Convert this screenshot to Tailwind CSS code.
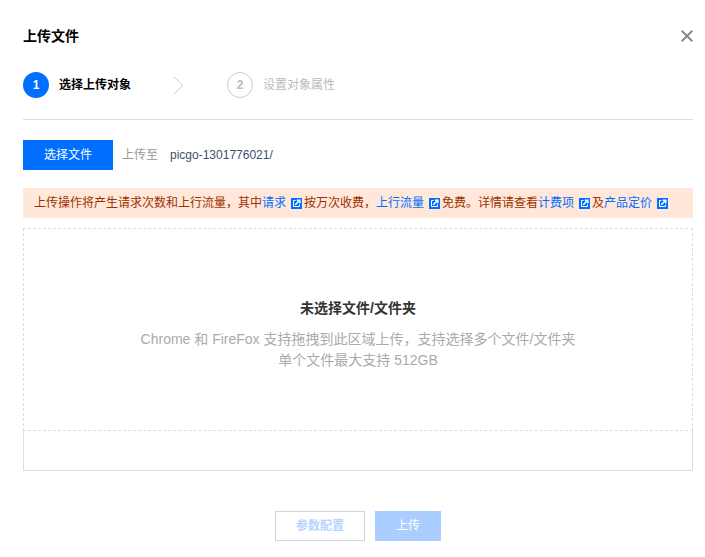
<!DOCTYPE html>
<html lang="zh">
<head>
<meta charset="utf-8">
<script src="https://cdn.jsdelivr.net/npm/@tailwindcss/browser@4"></script>
</head>
<body class="bg-white font-['Liberation_Sans','Noto_Sans_CJK_SC',sans-serif] text-xs">
<div class="w-[705px] h-[557px] overflow-hidden pl-[23px] pr-[12px] pt-[27px] relative">
  <div class="flex items-center justify-between h-[18px]">
    <h1 class="text-sm font-bold text-black leading-[18px] tracking-normal">上传文件</h1>
    <svg class="w-[12px] h-[12px]" viewBox="0 0 12 12" fill="none" stroke="#888" stroke-width="2"><path d="M.7.7 11.3 11.3M11.3.7.7 11.3"/></svg>
  </div>
  <div class="flex items-center mt-[27px] h-[26px]">
    <div class="w-[26px] h-[26px] rounded-full bg-[#006eff] text-white font-bold text-xs flex items-center justify-center">1</div>
    <span class="ml-[10px] font-bold text-black w-[73px]">选择上传对象</span>
    <svg class="ml-[41px] w-[12px] h-[18px]" viewBox="0 0 12 18" fill="none" stroke="#ccc" stroke-width="1"><path d="M1 1 10 9.5 1 18"/></svg>
    <div class="ml-[42px] w-[26px] h-[26px] rounded-full border border-[#ccc] text-[#bbb] font-bold text-xs flex items-center justify-center">2</div>
    <span class="ml-[10px] text-[#bbb]">设置对象属性</span>
  </div>
  <div class="border-t border-[#ddd] mt-[21px]"></div>
  <div class="flex items-center mt-[20px] h-[30px]">
    <button class="w-[90px] h-[30px] bg-[#006eff] text-white">选择文件</button>
    <span class="ml-[9px] text-[#999]">上传至</span>
    <span class="ml-[12px] text-[#3d4f6b]">picgo-1301776021/</span>
  </div>
  <div class="mt-[18px] h-[30px] bg-[#ffe8d9] text-[#9c3000] pl-[11px] flex items-center whitespace-nowrap">
    <span>上传操作将产生请求次数和上行流量，其中</span><span class="text-[#006eff]">请求</span>
    <svg class="w-[11px] h-[11px] ml-[5px] mr-[2px]" viewBox="0 0 11 11"><path fill="#006eff" d="M0 0h11v11H0z"/><path fill="none" stroke="#fff" stroke-width="1" d="M4.5 2.5h-2v6h6v-2"/><path fill="none" stroke="#fff" stroke-width="1.6" d="M4.2 6.8 8.2 2.8M5.8 2.2h3v3"/></svg>
    <span>按万次收费，</span><span class="text-[#006eff]">上行流量</span>
    <svg class="w-[11px] h-[11px] ml-[5px] mr-[2px]" viewBox="0 0 11 11"><path fill="#006eff" d="M0 0h11v11H0z"/><path fill="none" stroke="#fff" stroke-width="1" d="M4.5 2.5h-2v6h6v-2"/><path fill="none" stroke="#fff" stroke-width="1.6" d="M4.2 6.8 8.2 2.8M5.8 2.2h3v3"/></svg>
    <span>免费。详情请查看</span><span class="text-[#006eff]">计费项</span>
    <svg class="w-[11px] h-[11px] ml-[5px] mr-[2px]" viewBox="0 0 11 11"><path fill="#006eff" d="M0 0h11v11H0z"/><path fill="none" stroke="#fff" stroke-width="1" d="M4.5 2.5h-2v6h6v-2"/><path fill="none" stroke="#fff" stroke-width="1.6" d="M4.2 6.8 8.2 2.8M5.8 2.2h3v3"/></svg>
    <span>及</span><span class="text-[#006eff]">产品定价</span>
    <svg class="w-[11px] h-[11px] ml-[5px]" viewBox="0 0 11 11"><path fill="#006eff" d="M0 0h11v11H0z"/><path fill="none" stroke="#fff" stroke-width="1" d="M4.5 2.5h-2v6h6v-2"/><path fill="none" stroke="#fff" stroke-width="1.6" d="M4.2 6.8 8.2 2.8M5.8 2.2h3v3"/></svg>
  </div>
  <div class="mt-[10px] border border-[#ddd] h-[243px] relative">
    <div class="absolute inset-x-[-1px] top-[-1px] h-[203px] border border-dashed border-[#ddd] bg-white flex flex-col items-center pt-[69px]">
      <p class="text-[14px] font-bold text-[#333] leading-[20px]">未选择文件/文件夹</p>
      <p class="text-sm text-[#aaa] leading-[21px] mt-[11px] text-center">Chrome 和 FireFox 支持拖拽到此区域上传，支持选择多个文件/文件夹<br>单个文件最大支持 512GB</p>
    </div>
  </div>
  <div class="flex justify-center gap-[10px] mt-[40px]">
    <button class="w-[90px] h-[30px] border border-[#cfd5de] text-[#b5d4ff] font-bold bg-white">参数配置</button>
    <button class="w-[66px] h-[30px] bg-[#aaceff] text-white">上传</button>
  </div>
</div>
</body>
</html>
